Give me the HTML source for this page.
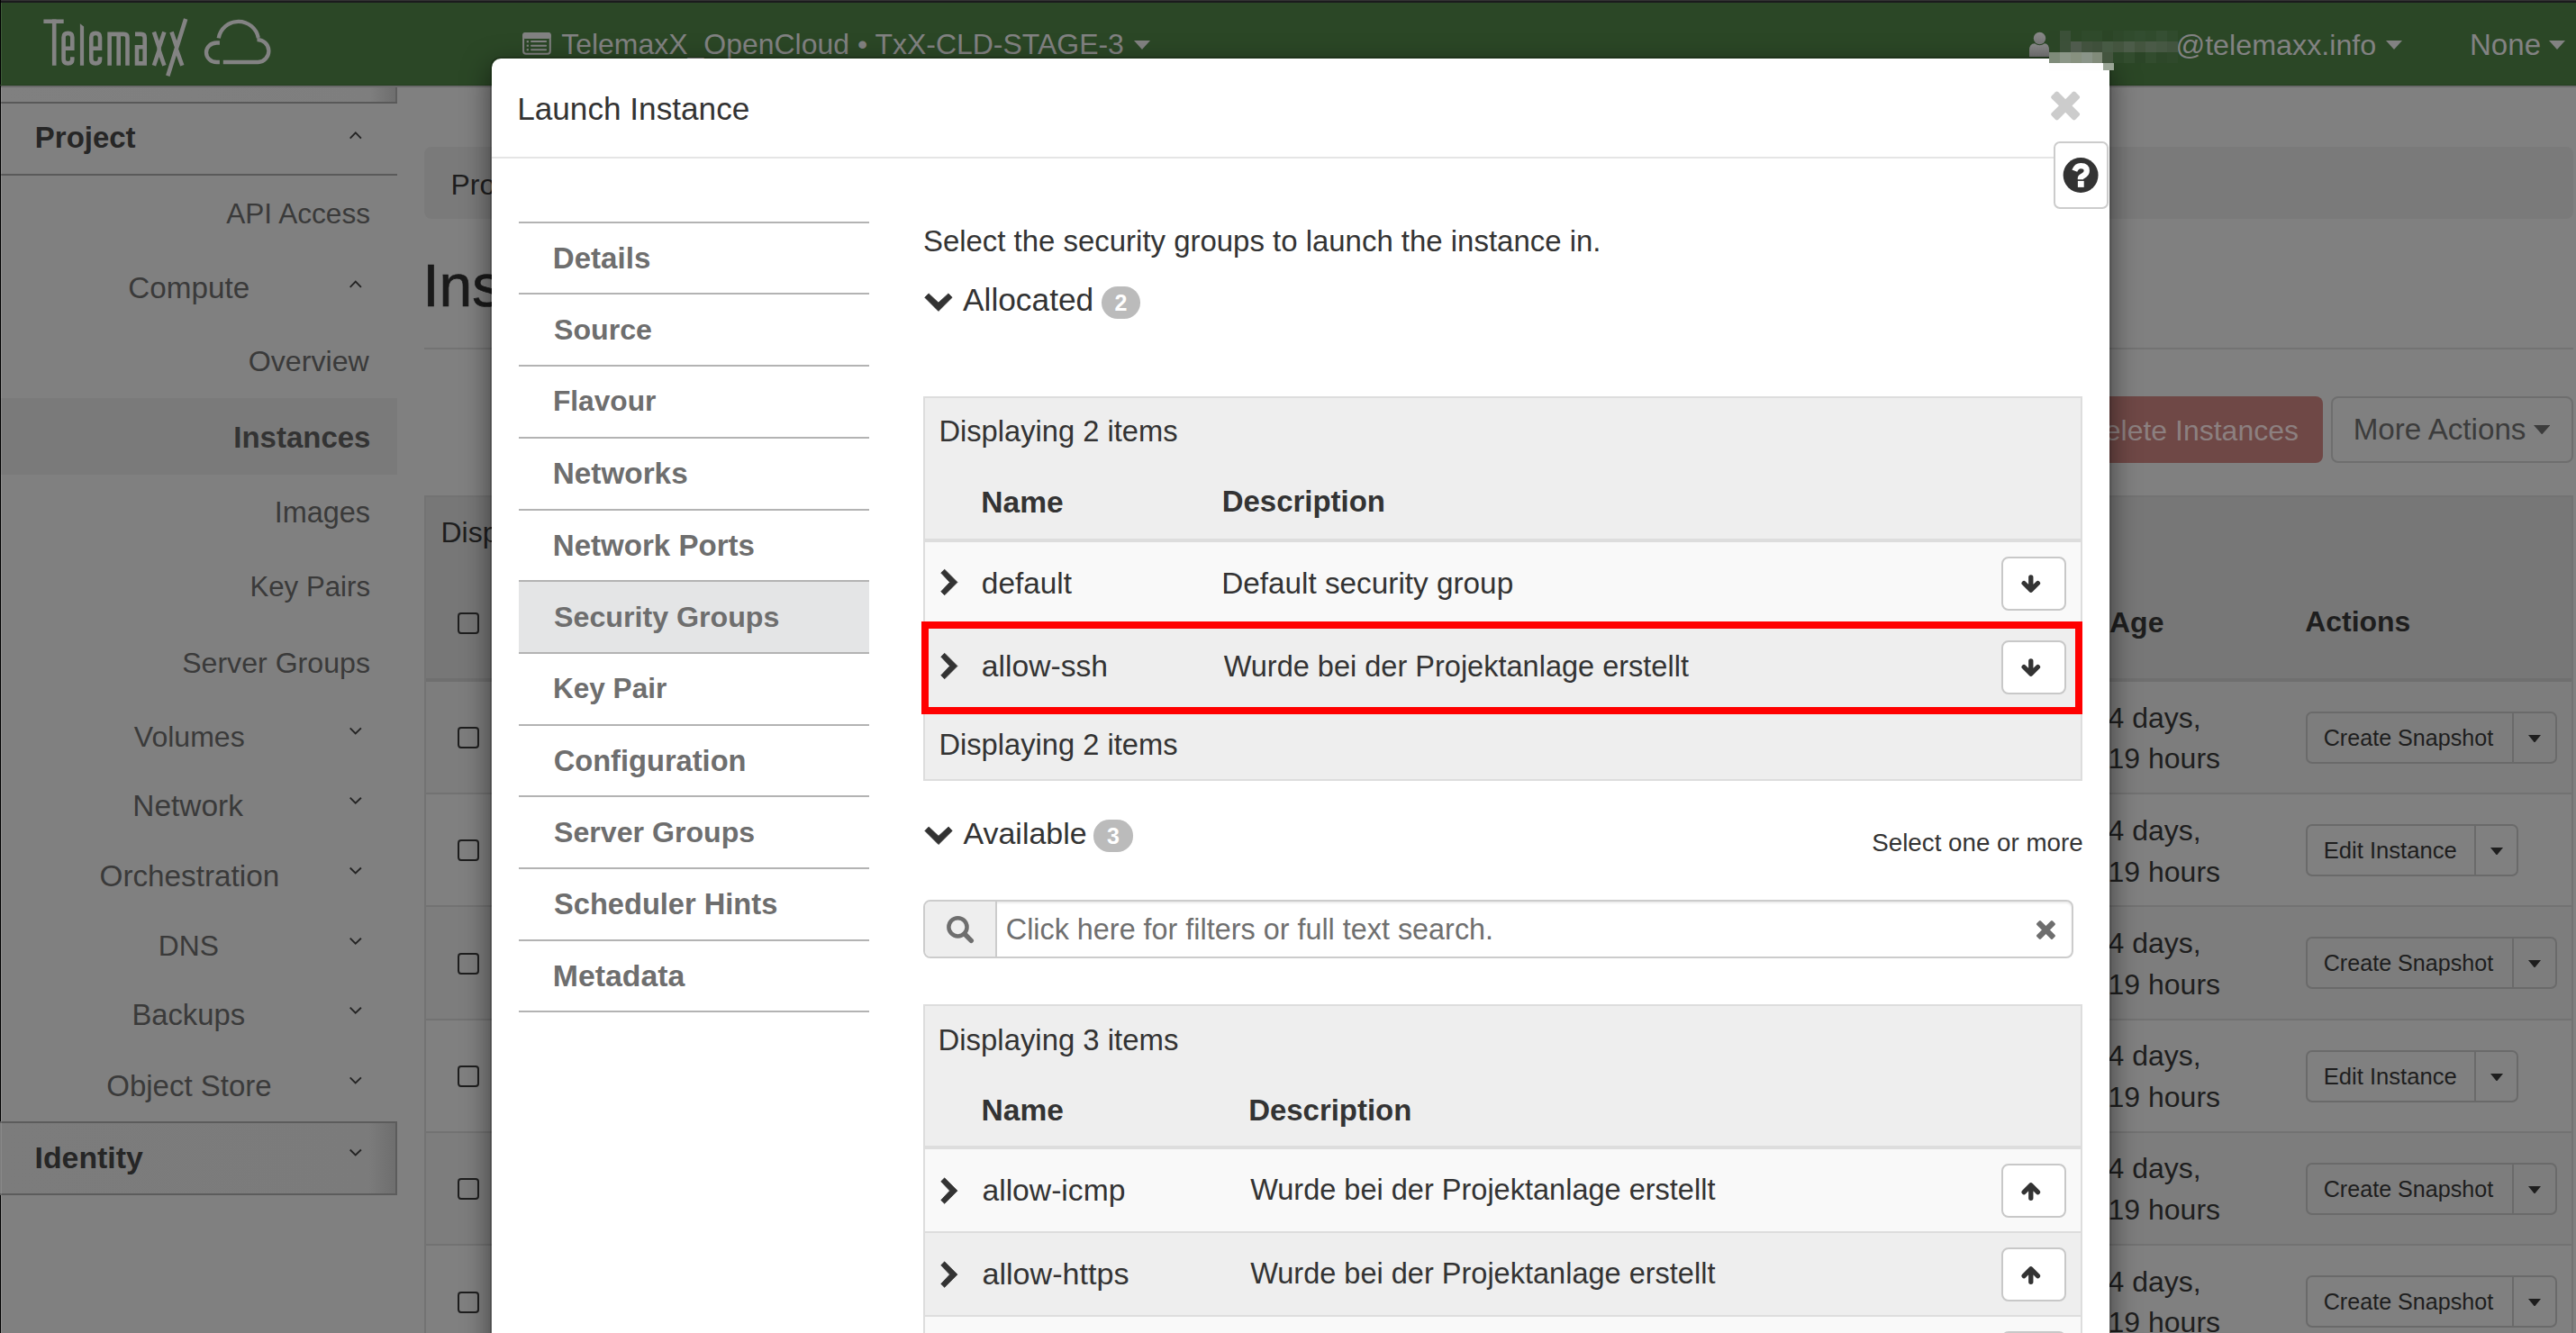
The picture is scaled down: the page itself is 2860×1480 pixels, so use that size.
<!DOCTYPE html>
<html><head><meta charset="utf-8"><style>
html,body{margin:0;padding:0;width:2860px;height:1480px;overflow:hidden;background:#808080;}
body{position:relative;font-family:"Liberation Sans",sans-serif;}
.t{position:absolute;white-space:nowrap;}
.r{position:absolute;}
#modal{position:absolute;left:0;top:0;width:2860px;height:1480px;overflow:hidden;}
</style></head><body>
<div class="r" style="left:0px;top:0px;width:2860px;height:1480px;background:#808080;"></div>
<div class="r" style="left:0px;top:0px;width:2860px;height:1px;background:#333333;"></div>
<div class="r" style="left:0px;top:1px;width:2860px;height:2px;background:#1b1b1d;"></div>
<div class="r" style="left:0px;top:3px;width:2860px;height:92px;background:#2b4726;"></div>
<div class="r" style="left:0px;top:95px;width:2860px;height:2px;background:#6a6a6a;"></div>
<div class="r" style="left:0px;top:0px;width:1px;height:1480px;background:#000000;"></div>
<div class="r" style="left:1px;top:3px;width:1px;height:92px;background:#3d5a38;"></div>
<svg class="r" style="left:0;top:0" width="320" height="95" viewBox="0 0 320 95">
<g fill="none" stroke="#838383" stroke-width="4.6" stroke-linecap="butt" stroke-linejoin="miter">
<path d="M48.4 23.7H70.7 M60.2 21.3V72.7"/>
<path d="M70.6 53.7H80.3V41.5Q80.3 36.9 75.5 36.9Q70.6 36.9 70.6 41.5V66Q70.6 70.4 75.5 70.4Q80.3 70.4 80.3 66V63.2"/>
<path d="M88.9 26.2L93.1 29.5V72.7H88.9Z" fill="#838383" stroke="none"/>
<path d="M101.3 53.7H111V41.5Q111 36.9 106.2 36.9Q101.3 36.9 101.3 41.5V66Q101.3 70.4 106.2 70.4Q111 70.4 111 66V63.2"/>
<path d="M121.6 72.7V37.9H137.5Q141.5 37.9 141.5 41.9V72.7 M131.7 37.9V72.7"/>
<path d="M150 37.9H156.7Q160.7 37.9 160.7 41.9V72.7 M160.7 52.2H152V70.4H160.7"/>
<path d="M170.9 35.6L176.6 52.5V56L170.9 72.7 M182.4 35.6L176.6 52.5 M176.6 56L182.4 72.7" stroke-linejoin="bevel"/>
<path d="M190.5 35.6L196.6 53.5 M196.1 55.5L202.3 72.7 M206.2 21L186.3 84.2"/>
</g>
<g fill="none" stroke="#838383" stroke-width="4.3">
<path d="M242.7 42.3A22.43 22.43 0 0 1 286.8 42"/>
<path d="M285.4 44.2A12.4 12.4 0 0 1 286.5 69H247.8"/>
<path d="M243.9 47.5H240.5A11.5 10.75 0 0 0 240.5 69H243.9"/>
</g>
</svg>
<svg class="r" style="left:578px;top:34px" width="36" height="30" viewBox="578 34 36 30">
<rect x="581.1" y="37" width="29.7" height="22.8" rx="3" fill="none" stroke="#828282" stroke-width="2"/>
<rect x="580.1" y="36" width="31.7" height="7.1" rx="3" fill="#828282"/>
<g fill="#828282"><rect x="584.7" y="45.1" width="2.2" height="2.2"/><rect x="584.7" y="49.6" width="2.2" height="2.2"/><rect x="584.7" y="54.1" width="2.2" height="2.2"/>
<rect x="589" y="45.1" width="18.1" height="2" rx="1"/><rect x="589" y="49.7" width="18.1" height="2" rx="1"/><rect x="589" y="54.2" width="18.1" height="2" rx="1"/></g>
</svg>
<div class="t" style="left:623.16px;top:32.92px;font-size:31.98px;line-height:31.98px;color:#828282;">TelemaxX_OpenCloud • TxX-CLD-STAGE-3</div>
<svg class="r" style="left:1259px;top:45px" width="18" height="10" viewBox="0 0 18 10"><path d="M0 0H18L9.0 10Z" fill="#828282"/></svg>
<svg class="r" style="left:2250px;top:34px" width="28" height="32" viewBox="2250 34 28 32">
<defs><linearGradient id="ug" x1="0" y1="0" x2="0" y2="1"><stop offset="0" stop-color="#8a8a8a"/><stop offset="1" stop-color="#767676"/></linearGradient></defs>
<circle cx="2264.5" cy="42.5" r="6.7" fill="url(#ug)"/>
<path d="M2253 63V56Q2253 48.3 2259 48.3Q2264.5 52 2270 48.3Q2275 48.3 2275 56V63Z" fill="url(#ug)"/>
</svg>
<div class="t" style="left:2415.42px;top:33.67px;font-size:32.28px;line-height:32.28px;color:#828282;">@telemaxx.info</div>
<svg class="r" style="left:2649px;top:45px" width="18" height="10" viewBox="0 0 18 10"><path d="M0 0H18L9.0 10Z" fill="#828282"/></svg>
<div class="t" style="left:2741.95px;top:32.97px;font-size:33.11px;line-height:33.11px;color:#828282;">None</div>
<svg class="r" style="left:2830px;top:45px" width="18" height="10" viewBox="0 0 18 10"><path d="M0 0H18L9.0 10Z" fill="#828282"/></svg>
<div class="r" style="left:1px;top:97px;width:438px;height:16px;background:linear-gradient(90deg,#808080 0px,#7e7e7e 410px,#6e6e6e 438px);"></div>
<div class="r" style="left:439px;top:97px;width:2px;height:18px;background:#5e5e5e;"></div>
<div class="r" style="left:1px;top:113px;width:440px;height:2px;background:#595959;"></div>
<div class="r" style="left:0px;top:94px;width:2860px;height:1px;background:#253f20;"></div>
<div class="r" style="left:1px;top:193px;width:440px;height:2px;background:#5a5a5a;"></div>
<div class="t" style="left:38.86px;top:137.12px;font-size:32.93px;line-height:32.93px;color:#262626;font-weight:700;">Project</div>
<div class="t" style="left:251.20px;top:222.24px;font-size:31.6px;line-height:31.6px;color:#3a3a3a;">API Access</div>
<div class="t" style="left:275.75px;top:385.45px;font-size:32.19px;line-height:32.19px;color:#3a3a3a;">Overview</div>
<div class="t" style="left:304.68px;top:552.52px;font-size:32.46px;line-height:32.46px;color:#3a3a3a;">Images</div>
<div class="t" style="left:277.40px;top:636.25px;font-size:31.24px;line-height:31.24px;color:#3a3a3a;">Key Pairs</div>
<div class="t" style="left:202.15px;top:719.80px;font-size:32.12px;line-height:32.12px;color:#3a3a3a;">Server Groups</div>
<div class="r" style="left:1px;top:442px;width:440px;height:85px;background:#7a7a7a;"></div>
<div class="t" style="left:259.26px;top:468.87px;font-size:32.99px;line-height:32.99px;color:#333333;font-weight:700;">Instances</div>
<div class="t" style="left:142.34px;top:302.86px;font-size:33.23px;line-height:33.23px;color:#3a3a3a;">Compute</div>
<div class="t" style="left:148.84px;top:801.57px;font-size:32.04px;line-height:32.04px;color:#3a3a3a;">Volumes</div>
<div class="t" style="left:147.33px;top:877.70px;font-size:33.43px;line-height:33.43px;color:#3a3a3a;">Network</div>
<div class="t" style="left:110.50px;top:955.62px;font-size:33.28px;line-height:33.28px;color:#3a3a3a;">Orchestration</div>
<div class="t" style="left:175.86px;top:1035.08px;font-size:31.79px;line-height:31.79px;color:#3a3a3a;">DNS</div>
<div class="t" style="left:146.38px;top:1111.25px;font-size:32.77px;line-height:32.77px;color:#3a3a3a;">Backups</div>
<div class="t" style="left:118.21px;top:1188.73px;font-size:33.03px;line-height:33.03px;color:#3a3a3a;">Object Store</div>
<div class="r" style="left:0px;top:1245px;width:441px;height:82px;background:linear-gradient(90deg,#7c7c7c 0px,#7b7b7b 410px,#6e6e6e 439px);box-sizing:border-box;border:2px solid #5c5c5c;border-left:none;"></div>
<div class="t" style="left:38.50px;top:1268.96px;font-size:33.83px;line-height:33.83px;color:#262626;font-weight:700;">Identity</div>
<svg class="r" style="left:0;top:0" width="441" height="1480"><path d="M388.7 153.6L394.8 147.4L400.9 153.6 M388.7 318.8L394.8 312.7L400.9 318.8 M388.7 808.4L394.7 814.4L400.9 808.4 M388.7 885.7L394.7 891.7L400.9 885.7 M388.7 963.5L394.7 969.5L400.9 963.5 M388.7 1041.7L394.7 1047.7L400.9 1041.7 M388.7 1118.7L394.7 1124.7L400.9 1118.7 M388.7 1196.4L394.7 1202.4L400.9 1196.4 M388.7 1276.5L394.7 1282.5L400.9 1276.5" fill="none" stroke="#242424" stroke-width="1.9"/></svg>
<div class="r" style="left:471px;top:163px;width:2386px;height:80px;background:#7a7a7a;border-radius:8px;"></div>
<div class="t" style="left:500.50px;top:188.91px;font-size:32px;line-height:32px;color:#1e1e1e;">Project / Compute / Instances</div>
<div class="t" style="left:469.20px;top:284.02px;font-size:66px;line-height:66px;color:#1a1a1a;-webkit-text-stroke:0.7px #1a1a1a;">Instances</div>
<div class="r" style="left:471px;top:386px;width:2386px;height:2px;background:#737373;"></div>
<div class="r" style="left:2100px;top:440px;width:479px;height:74px;background:#6f4846;border-radius:8px;"></div>
<div class="t" style="right:308.00px;text-align:right;top:461.51px;font-size:32px;line-height:32px;color:#8c8080;">Delete Instances</div>
<div class="r" style="left:2588px;top:440px;width:269px;height:74px;background:transparent;box-sizing:border-box;border:2px solid #6e6e6e;border-radius:8px;"></div>
<div class="t" style="left:2612.64px;top:459.89px;font-size:33.2px;line-height:33.2px;color:#3c3c3c;">More Actions</div>
<svg class="r" style="left:2812.6px;top:471.8px" width="18.4" height="10.4" viewBox="0 0 18.4 10.4"><path d="M0 0H18.4L9.2 10.4Z" fill="#3c3c3c"/></svg>
<div class="r" style="left:471px;top:550px;width:2386px;height:930px;background:#7d7d7d;box-sizing:border-box;border:2px solid #737373;border-bottom:none;"></div>
<div class="r" style="left:473px;top:552px;width:2382px;height:201px;background:#777777;"></div>
<div class="r" style="left:473px;top:753px;width:2382px;height:4px;background:#6f6f6f;"></div>
<div class="t" style="left:489.50px;top:574.91px;font-size:32px;line-height:32px;color:#1e1e1e;">Displaying 6 items</div>
<div class="t" style="left:2342.00px;top:674.91px;font-size:32px;line-height:32px;color:#1e1e1e;font-weight:700;">Age</div>
<div class="t" style="left:2559.20px;top:674.96px;font-size:31.94px;line-height:31.94px;color:#1e1e1e;font-weight:700;">Actions</div>
<div class="r" style="left:508px;top:680px;width:24px;height:24px;background:transparent;box-sizing:border-box;border:2px solid #1e1e1e;border-radius:4px;"></div>
<div class="r" style="left:473px;top:757px;width:2382px;height:123px;background:#7d7d7d;"></div>
<div class="r" style="left:473px;top:880px;width:2382px;height:2px;background:#727272;"></div>
<div class="r" style="left:508px;top:807px;width:24px;height:24px;background:transparent;box-sizing:border-box;border:2px solid #1e1e1e;border-radius:4px;"></div>
<div class="t" style="left:2340.50px;top:780.51px;font-size:32px;line-height:32px;color:#1e1e1e;">4 days,</div>
<div class="t" style="left:2340.50px;top:826.41px;font-size:32px;line-height:32px;color:#1e1e1e;">19 hours</div>
<div class="r" style="left:2560px;top:790px;width:279px;height:58px;background:transparent;box-sizing:border-box;border:2px solid #6a6a6a;border-radius:7px;"></div>
<div class="r" style="left:2789px;top:790px;width:2px;height:58px;background:#6a6a6a;"></div>
<div class="t" style="left:2579.74px;top:807.33px;font-size:25.12px;line-height:25.12px;color:#1e1e1e;">Create Snapshot</div>
<svg class="r" style="left:2807px;top:815.7px" width="14" height="8.6" viewBox="0 0 14 8.6"><path d="M0 0H14L7.0 8.6Z" fill="#1e1e1e"/></svg>
<div class="r" style="left:473px;top:882px;width:2382px;height:123px;background:#808080;"></div>
<div class="r" style="left:473px;top:1005px;width:2382px;height:2px;background:#727272;"></div>
<div class="r" style="left:508px;top:932px;width:24px;height:24px;background:transparent;box-sizing:border-box;border:2px solid #1e1e1e;border-radius:4px;"></div>
<div class="t" style="left:2340.50px;top:905.71px;font-size:32px;line-height:32px;color:#1e1e1e;">4 days,</div>
<div class="t" style="left:2340.50px;top:951.61px;font-size:32px;line-height:32px;color:#1e1e1e;">19 hours</div>
<div class="r" style="left:2560px;top:915px;width:236px;height:58px;background:transparent;box-sizing:border-box;border:2px solid #6a6a6a;border-radius:7px;"></div>
<div class="r" style="left:2747px;top:915px;width:2px;height:58px;background:#6a6a6a;"></div>
<div class="t" style="left:2579.65px;top:931.89px;font-size:25.64px;line-height:25.64px;color:#1e1e1e;">Edit Instance</div>
<svg class="r" style="left:2765px;top:940.7px" width="14" height="8.6" viewBox="0 0 14 8.6"><path d="M0 0H14L7.0 8.6Z" fill="#1e1e1e"/></svg>
<div class="r" style="left:473px;top:1007px;width:2382px;height:124px;background:#7d7d7d;"></div>
<div class="r" style="left:473px;top:1131px;width:2382px;height:2px;background:#727272;"></div>
<div class="r" style="left:508px;top:1058px;width:24px;height:24px;background:transparent;box-sizing:border-box;border:2px solid #1e1e1e;border-radius:4px;"></div>
<div class="t" style="left:2340.50px;top:1030.91px;font-size:32px;line-height:32px;color:#1e1e1e;">4 days,</div>
<div class="t" style="left:2340.50px;top:1076.81px;font-size:32px;line-height:32px;color:#1e1e1e;">19 hours</div>
<div class="r" style="left:2560px;top:1040px;width:279px;height:58px;background:transparent;box-sizing:border-box;border:2px solid #6a6a6a;border-radius:7px;"></div>
<div class="r" style="left:2789px;top:1040px;width:2px;height:58px;background:#6a6a6a;"></div>
<div class="t" style="left:2579.74px;top:1057.33px;font-size:25.12px;line-height:25.12px;color:#1e1e1e;">Create Snapshot</div>
<svg class="r" style="left:2807px;top:1065.7px" width="14" height="8.6" viewBox="0 0 14 8.6"><path d="M0 0H14L7.0 8.6Z" fill="#1e1e1e"/></svg>
<div class="r" style="left:473px;top:1133px;width:2382px;height:123px;background:#808080;"></div>
<div class="r" style="left:473px;top:1256px;width:2382px;height:2px;background:#727272;"></div>
<div class="r" style="left:508px;top:1183px;width:24px;height:24px;background:transparent;box-sizing:border-box;border:2px solid #1e1e1e;border-radius:4px;"></div>
<div class="t" style="left:2340.50px;top:1156.11px;font-size:32px;line-height:32px;color:#1e1e1e;">4 days,</div>
<div class="t" style="left:2340.50px;top:1202.01px;font-size:32px;line-height:32px;color:#1e1e1e;">19 hours</div>
<div class="r" style="left:2560px;top:1166px;width:236px;height:58px;background:transparent;box-sizing:border-box;border:2px solid #6a6a6a;border-radius:7px;"></div>
<div class="r" style="left:2747px;top:1166px;width:2px;height:58px;background:#6a6a6a;"></div>
<div class="t" style="left:2579.65px;top:1182.89px;font-size:25.64px;line-height:25.64px;color:#1e1e1e;">Edit Instance</div>
<svg class="r" style="left:2765px;top:1191.7px" width="14" height="8.6" viewBox="0 0 14 8.6"><path d="M0 0H14L7.0 8.6Z" fill="#1e1e1e"/></svg>
<div class="r" style="left:473px;top:1258px;width:2382px;height:123px;background:#7d7d7d;"></div>
<div class="r" style="left:473px;top:1381px;width:2382px;height:2px;background:#727272;"></div>
<div class="r" style="left:508px;top:1308px;width:24px;height:24px;background:transparent;box-sizing:border-box;border:2px solid #1e1e1e;border-radius:4px;"></div>
<div class="t" style="left:2340.50px;top:1281.31px;font-size:32px;line-height:32px;color:#1e1e1e;">4 days,</div>
<div class="t" style="left:2340.50px;top:1327.21px;font-size:32px;line-height:32px;color:#1e1e1e;">19 hours</div>
<div class="r" style="left:2560px;top:1291px;width:279px;height:58px;background:transparent;box-sizing:border-box;border:2px solid #6a6a6a;border-radius:7px;"></div>
<div class="r" style="left:2789px;top:1291px;width:2px;height:58px;background:#6a6a6a;"></div>
<div class="t" style="left:2579.74px;top:1308.33px;font-size:25.12px;line-height:25.12px;color:#1e1e1e;">Create Snapshot</div>
<svg class="r" style="left:2807px;top:1316.7px" width="14" height="8.6" viewBox="0 0 14 8.6"><path d="M0 0H14L7.0 8.6Z" fill="#1e1e1e"/></svg>
<div class="r" style="left:473px;top:1383px;width:2382px;height:123px;background:#808080;"></div>
<div class="r" style="left:473px;top:1506px;width:2382px;height:2px;background:#727272;"></div>
<div class="r" style="left:508px;top:1434px;width:24px;height:24px;background:transparent;box-sizing:border-box;border:2px solid #1e1e1e;border-radius:4px;"></div>
<div class="t" style="left:2340.50px;top:1406.51px;font-size:32px;line-height:32px;color:#1e1e1e;">4 days,</div>
<div class="t" style="left:2340.50px;top:1452.41px;font-size:32px;line-height:32px;color:#1e1e1e;">19 hours</div>
<div class="r" style="left:2560px;top:1416px;width:279px;height:58px;background:transparent;box-sizing:border-box;border:2px solid #6a6a6a;border-radius:7px;"></div>
<div class="r" style="left:2789px;top:1416px;width:2px;height:58px;background:#6a6a6a;"></div>
<div class="t" style="left:2579.74px;top:1433.33px;font-size:25.12px;line-height:25.12px;color:#1e1e1e;">Create Snapshot</div>
<svg class="r" style="left:2807px;top:1441.7px" width="14" height="8.6" viewBox="0 0 14 8.6"><path d="M0 0H14L7.0 8.6Z" fill="#1e1e1e"/></svg>
<div class="r" style="left:1px;top:97px;width:1px;height:1383px;background:rgba(255,255,255,0.1);"></div>
<div id="modal"><div class="r" style="left:544px;top:63px;width:1796px;height:1500px;background:#fff;border:2px solid rgba(0,0,0,.2);background-clip:padding-box;border-radius:12px;box-shadow:0 10px 30px rgba(0,0,0,.5);"></div>
<div class="t" style="left:574.18px;top:102.61px;font-size:35.19px;line-height:35.19px;color:#333333;">Launch Instance</div>
<div class="r" style="left:546px;top:174px;width:1734px;height:2px;background:#e5e5e5;"></div>
<div class="r" style="left:2279.5px;top:156.7px;width:61.09999999999991px;height:75.70000000000002px;background:#fff;box-sizing:border-box;border:2px solid #cccccc;border-radius:7px;"></div>
<svg class="r" style="left:0;top:0" width="2860" height="400"><circle cx="2310.1" cy="194.5" r="19.45" fill="#333"/><path d="M2303.3 189.6Q2305.5 184.1 2310.2 184.1Q2316.8 184.1 2316.8 189.6Q2316.8 193.3 2312.9 195.2Q2309.9 196.7 2309.9 198V199.3" fill="none" stroke="#fff" stroke-width="6.3"/><rect x="2306.9" y="200.9" width="6.8" height="7" fill="#fff"/></svg>
<svg class="r" style="left:0;top:0" width="2860" height="1480"><g fill="#cccccc"><rect x="2274.54" y="112.30" width="37.22" height="10.30" rx="2.27" transform="rotate(45 2293.15 117.45)"/><rect x="2274.54" y="112.30" width="37.22" height="10.30" rx="2.27" transform="rotate(-45 2293.15 117.45)"/></g></svg>
<div class="t" style="left:613.85px;top:270.20px;font-size:33.07px;line-height:33.07px;color:#6e6e6e;font-weight:700;">Details</div>
<div class="t" style="left:615.04px;top:349.98px;font-size:32.15px;line-height:32.15px;color:#6e6e6e;font-weight:700;">Source</div>
<div class="t" style="left:613.94px;top:430.35px;font-size:31.71px;line-height:31.71px;color:#6e6e6e;font-weight:700;">Flavour</div>
<div class="t" style="left:613.84px;top:509.01px;font-size:33.29px;line-height:33.29px;color:#6e6e6e;font-weight:700;">Networks</div>
<div class="t" style="left:613.85px;top:589.22px;font-size:33.05px;line-height:33.05px;color:#6e6e6e;font-weight:700;">Network Ports</div>
<div class="r" style="left:576px;top:646px;width:389px;height:78px;background:#e4e5e6;"></div>
<div class="t" style="left:615.03px;top:668.94px;font-size:32.2px;line-height:32.2px;color:#6e6e6e;font-weight:700;">Security Groups</div>
<div class="t" style="left:613.95px;top:749.47px;font-size:31.57px;line-height:31.57px;color:#6e6e6e;font-weight:700;">Key Pair</div>
<div class="t" style="left:614.69px;top:828.56px;font-size:32.64px;line-height:32.64px;color:#6e6e6e;font-weight:700;">Configuration</div>
<div class="t" style="left:615.04px;top:908.00px;font-size:32.12px;line-height:32.12px;color:#6e6e6e;font-weight:700;">Server Groups</div>
<div class="t" style="left:615.02px;top:987.59px;font-size:32.61px;line-height:32.61px;color:#6e6e6e;font-weight:700;">Scheduler Hints</div>
<div class="t" style="left:613.80px;top:1066.59px;font-size:33.79px;line-height:33.79px;color:#6e6e6e;font-weight:700;">Metadata</div>
<div class="r" style="left:576px;top:246px;width:389px;height:2px;background:#b3b3b3;"></div>
<div class="r" style="left:576px;top:325px;width:389px;height:2px;background:#b3b3b3;"></div>
<div class="r" style="left:576px;top:405px;width:389px;height:2px;background:#b3b3b3;"></div>
<div class="r" style="left:576px;top:485px;width:389px;height:2px;background:#b3b3b3;"></div>
<div class="r" style="left:576px;top:565px;width:389px;height:2px;background:#b3b3b3;"></div>
<div class="r" style="left:576px;top:644px;width:389px;height:2px;background:#b3b3b3;"></div>
<div class="r" style="left:576px;top:724px;width:389px;height:2px;background:#b3b3b3;"></div>
<div class="r" style="left:576px;top:804px;width:389px;height:2px;background:#b3b3b3;"></div>
<div class="r" style="left:576px;top:883px;width:389px;height:2px;background:#b3b3b3;"></div>
<div class="r" style="left:576px;top:963px;width:389px;height:2px;background:#b3b3b3;"></div>
<div class="r" style="left:576px;top:1043px;width:389px;height:2px;background:#b3b3b3;"></div>
<div class="r" style="left:576px;top:1122px;width:389px;height:2px;background:#b3b3b3;"></div>
<div class="t" style="left:1024.92px;top:251.80px;font-size:32.95px;line-height:32.95px;color:#333333;">Select the security groups to launch the instance in.</div>
<svg class="r" style="left:0;top:0" width="2860" height="1480"><path d="M1026.75 330.25L1031.06 325.90L1041.90 336.06L1053.00 325.90L1057.10 330.25L1041.90 345.40Z" fill="#333" stroke="#333" stroke-width="0.8" stroke-linejoin="round" /></svg>
<div class="t" style="left:1069.00px;top:315.10px;font-size:35.31px;line-height:35.31px;color:#333333;">Allocated</div>
<div class="r" style="left:1222.9px;top:318.1px;width:43.0px;height:35.599999999999966px;background:#bbbbbb;border-radius:17.799999999999983px;"></div>
<div class="t" style="left:744.40px;width:1000px;text-align:center;top:323.93px;font-size:25px;line-height:25px;color:#ffffff;font-weight:700;">2</div>
<div class="r" style="left:1025px;top:439.5px;width:1287px;height:427.5px;background:#eeeeee;box-sizing:border-box;border:2px solid #dddddd;"></div>
<div class="t" style="left:1042.38px;top:463.32px;font-size:32.69px;line-height:32.69px;color:#333333;">Displaying 2 items</div>
<div class="t" style="left:1089.32px;top:540.59px;font-size:33.56px;line-height:33.56px;color:#333333;font-weight:700;">Name</div>
<div class="t" style="left:1356.76px;top:541.10px;font-size:32.95px;line-height:32.95px;color:#333333;font-weight:700;">Description</div>
<div class="r" style="left:1027px;top:598px;width:1283px;height:4px;background:#dddddd;"></div>
<div class="r" style="left:1027px;top:602px;width:1283px;height:91px;background:#f9f9f9;"></div>
<div class="r" style="left:1027px;top:693px;width:1283px;height:2px;background:#dddddd;"></div>
<svg class="r" style="left:0;top:0" width="2860" height="1480"><path d="M1048.70 632.20L1062.95 646.45L1048.70 660.70L1044.76 656.80L1054.50 646.45L1044.76 636.10Z" fill="#333" stroke="#333" stroke-width="0.8" stroke-linejoin="round" /></svg>
<div class="t" style="left:1089.87px;top:631.45px;font-size:33.37px;line-height:33.37px;color:#333333;">default</div>
<div class="t" style="left:1356.13px;top:631.49px;font-size:33.32px;line-height:33.32px;color:#333333;">Default security group</div>
<div class="r" style="left:2222.2px;top:618.2px;width:71.40000000000009px;height:59.60000000000002px;background:#ffffff;box-sizing:border-box;border:2px solid #c8c8c8;border-radius:8px;"></div>
<svg class="r" style="left:0;top:0" width="2860" height="1480"><path d="M2254.8 640.8V653.0 M2247.1000000000004 647.5L2254.8 655.2L2262.5 647.5" fill="none" stroke="#333" stroke-width="5.3" stroke-linejoin="round" stroke-linecap="round"/></svg>
<div class="r" style="left:1027px;top:695px;width:1283px;height:91px;background:#eeeeee;"></div>
<div class="r" style="left:1027px;top:786px;width:1283px;height:2px;background:#dddddd;"></div>
<svg class="r" style="left:0;top:0" width="2860" height="1480"><path d="M1048.70 725.25L1062.95 739.50L1048.70 753.75L1044.76 749.85L1054.50 739.50L1044.76 729.15Z" fill="#333" stroke="#333" stroke-width="0.8" stroke-linejoin="round" /></svg>
<div class="t" style="left:1089.85px;top:723.21px;font-size:33.65px;line-height:33.65px;color:#333333;">allow-ssh</div>
<div class="t" style="left:1358.64px;top:724.17px;font-size:32.52px;line-height:32.52px;color:#333333;">Wurde bei der Projektanlage erstellt</div>
<div class="r" style="left:2222.2px;top:711.2px;width:71.40000000000009px;height:59.60000000000002px;background:#ffffff;box-sizing:border-box;border:2px solid #c8c8c8;border-radius:8px;"></div>
<svg class="r" style="left:0;top:0" width="2860" height="1480"><path d="M2254.8 733.8V746.0 M2247.1000000000004 740.5L2254.8 748.2L2262.5 740.5" fill="none" stroke="#333" stroke-width="5.3" stroke-linejoin="round" stroke-linecap="round"/></svg>
<div class="t" style="left:1042.38px;top:810.82px;font-size:32.69px;line-height:32.69px;color:#333333;">Displaying 2 items</div>
<div class="r" style="left:1023px;top:690px;width:1289px;height:102.5px;background:transparent;box-sizing:border-box;border:8px solid #ff0000;"></div>
<svg class="r" style="left:0;top:0" width="2860" height="1480"><path d="M1026.85 922.45L1031.16 918.10L1042.00 928.26L1053.10 918.10L1057.20 922.45L1042.00 937.60Z" fill="#333" stroke="#333" stroke-width="0.8" stroke-linejoin="round" /></svg>
<div class="t" style="left:1069.40px;top:908.42px;font-size:33.99px;line-height:33.99px;color:#333333;">Available</div>
<div class="r" style="left:1214.3px;top:910.4px;width:43.299999999999955px;height:35.200000000000045px;background:#bbbbbb;border-radius:17.600000000000023px;"></div>
<div class="t" style="left:735.95px;width:1000px;text-align:center;top:915.83px;font-size:25px;line-height:25px;color:#ffffff;font-weight:700;">3</div>
<div class="t" style="left:2078.25px;top:922.10px;font-size:27.75px;line-height:27.75px;color:#333333;">Select one or more</div>
<div class="r" style="left:1025px;top:999px;width:1277px;height:65px;background:#ffffff;box-sizing:border-box;border:2px solid #cccccc;border-radius:8px;box-shadow:inset 0 2px 2px rgba(0,0,0,.075);"></div>
<div class="r" style="left:1027px;top:1001px;width:78px;height:61px;background:#eeeeee;border-radius:6px 0 0 6px;"></div>
<div class="r" style="left:1105px;top:1001px;width:2px;height:61px;background:#cccccc;"></div>
<svg class="r" style="left:0;top:0" width="2860" height="1480"><path d="M1073.55 1029.3A10.1 10.1 0 1 1 1053.35 1029.3A10.1 10.1 0 1 1 1073.55 1029.3Z" fill="none" stroke="#6e6e6e" stroke-width="4.5" stroke-linejoin="round" /></svg>
<svg class="r" style="left:0;top:0" width="2860" height="1480"><path d="M1071 1037L1078.3 1044.3" fill="none" stroke="#6e6e6e" stroke-width="5.4" stroke-linejoin="round" stroke-linecap="round"/></svg>
<div class="t" style="left:1116.78px;top:1016.09px;font-size:32.37px;line-height:32.37px;color:#6f6f6f;">Click here for filters or full text search.</div>
<svg class="r" style="left:0;top:0" width="2860" height="1480"><g fill="#6e6e6e"><rect x="2259.02" y="1029.25" width="24.85" height="6.40" rx="1.41" transform="rotate(45 2271.45 1032.45)"/><rect x="2259.02" y="1029.25" width="24.85" height="6.40" rx="1.41" transform="rotate(-45 2271.45 1032.45)"/></g></svg>
<div class="r" style="left:1025px;top:1114.5px;width:1287px;height:485.5px;background:#eeeeee;box-sizing:border-box;border:2px solid #dddddd;"></div>
<div class="t" style="left:1041.57px;top:1139.15px;font-size:32.89px;line-height:32.89px;color:#333333;">Displaying 3 items</div>
<div class="t" style="left:1089.62px;top:1216.39px;font-size:33.56px;line-height:33.56px;color:#333333;font-weight:700;">Name</div>
<div class="t" style="left:1386.16px;top:1216.90px;font-size:32.95px;line-height:32.95px;color:#333333;font-weight:700;">Description</div>
<div class="r" style="left:1027px;top:1272px;width:1283px;height:4px;background:#dddddd;"></div>
<div class="r" style="left:1027px;top:1276px;width:1283px;height:91px;background:#f9f9f9;"></div>
<div class="r" style="left:1027px;top:1367px;width:1283px;height:2px;background:#dddddd;"></div>
<svg class="r" style="left:0;top:0" width="2860" height="1480"><path d="M1048.70 1307.85L1062.95 1322.10L1048.70 1336.35L1044.76 1332.45L1054.50 1322.10L1044.76 1311.75Z" fill="#333" stroke="#333" stroke-width="0.8" stroke-linejoin="round" /></svg>
<div class="t" style="left:1090.45px;top:1304.50px;font-size:33.66px;line-height:33.66px;color:#333333;">allow-icmp</div>
<div class="t" style="left:1388.14px;top:1305.47px;font-size:32.52px;line-height:32.52px;color:#333333;">Wurde bei der Projektanlage erstellt</div>
<div class="r" style="left:2222.2px;top:1292.2px;width:71.40000000000009px;height:59.59999999999991px;background:#ffffff;box-sizing:border-box;border:2px solid #c8c8c8;border-radius:8px;"></div>
<svg class="r" style="left:0;top:0" width="2860" height="1480"><path d="M2254.8 1330.35V1317.0 M2247.1000000000004 1323.7L2254.8 1315.8L2262.5 1323.7" fill="none" stroke="#333" stroke-width="5.3" stroke-linejoin="round" stroke-linecap="round"/></svg>
<div class="r" style="left:1027px;top:1369px;width:1283px;height:91px;background:#eeeeee;"></div>
<div class="r" style="left:1027px;top:1460px;width:1283px;height:2px;background:#dddddd;"></div>
<svg class="r" style="left:0;top:0" width="2860" height="1480"><path d="M1048.70 1400.85L1062.95 1415.10L1048.70 1429.35L1044.76 1425.45L1054.50 1415.10L1044.76 1404.75Z" fill="#333" stroke="#333" stroke-width="0.8" stroke-linejoin="round" /></svg>
<div class="t" style="left:1090.44px;top:1396.92px;font-size:34.11px;line-height:34.11px;color:#333333;">allow-https</div>
<div class="t" style="left:1388.14px;top:1398.27px;font-size:32.52px;line-height:32.52px;color:#333333;">Wurde bei der Projektanlage erstellt</div>
<div class="r" style="left:2222.2px;top:1385.2px;width:71.40000000000009px;height:59.59999999999991px;background:#ffffff;box-sizing:border-box;border:2px solid #c8c8c8;border-radius:8px;"></div>
<svg class="r" style="left:0;top:0" width="2860" height="1480"><path d="M2254.8 1423.35V1410.0 M2247.1000000000004 1416.7L2254.8 1408.8L2262.5 1416.7" fill="none" stroke="#333" stroke-width="5.3" stroke-linejoin="round" stroke-linecap="round"/></svg>
<div class="r" style="left:1027px;top:1462px;width:1283px;height:91px;background:#f9f9f9;"></div>
<div class="r" style="left:1027px;top:1553px;width:1283px;height:2px;background:#dddddd;"></div>
<svg class="r" style="left:0;top:0" width="2860" height="1480"><path d="M1048.70 1493.85L1062.95 1508.10L1048.70 1522.35L1044.76 1518.45L1054.50 1508.10L1044.76 1497.75Z" fill="#333" stroke="#333" stroke-width="0.8" stroke-linejoin="round" /></svg>
<div class="t" style="left:1090.39px;top:1488.72px;font-size:35.29px;line-height:35.29px;color:#333333;">allow-http</div>
<div class="t" style="left:1388.14px;top:1491.07px;font-size:32.52px;line-height:32.52px;color:#333333;">Wurde bei der Projektanlage erstellt</div>
<div class="r" style="left:2222.2px;top:1478.2px;width:71.40000000000009px;height:59.59999999999991px;background:#ffffff;box-sizing:border-box;border:2px solid #c8c8c8;border-radius:8px;"></div>
<svg class="r" style="left:0;top:0" width="2860" height="1480"><path d="M2254.8 1516.35V1503.0 M2247.1000000000004 1509.7L2254.8 1501.8L2262.5 1509.7" fill="none" stroke="#333" stroke-width="5.3" stroke-linejoin="round" stroke-linecap="round"/></svg>
</div><div class="r" style="left:2275px;top:34px;width:12px;height:12px;background:#2b4526;"></div>
<div class="r" style="left:2287px;top:34px;width:12px;height:12px;background:#3b5038;"></div>
<div class="r" style="left:2299px;top:34px;width:12px;height:12px;background:#2c4727;"></div>
<div class="r" style="left:2311px;top:34px;width:12px;height:12px;background:#2f4a2b;"></div>
<div class="r" style="left:2323px;top:34px;width:11px;height:12px;background:#2f4a2b;"></div>
<div class="r" style="left:2334px;top:34px;width:12px;height:12px;background:#2b4526;"></div>
<div class="r" style="left:2346px;top:34px;width:12px;height:12px;background:#2e482a;"></div>
<div class="r" style="left:2358px;top:34px;width:12px;height:12px;background:#304b2d;"></div>
<div class="r" style="left:2370px;top:34px;width:12px;height:12px;background:#324d30;"></div>
<div class="r" style="left:2382px;top:34px;width:12px;height:12px;background:#304b2d;"></div>
<div class="r" style="left:2394px;top:34px;width:12px;height:12px;background:#354f33;"></div>
<div class="r" style="left:2406px;top:34px;width:12px;height:12px;background:#304b2d;"></div>
<div class="r" style="left:2275px;top:46px;width:12px;height:12px;background:#2b4526;"></div>
<div class="r" style="left:2287px;top:46px;width:12px;height:12px;background:#3c5039;"></div>
<div class="r" style="left:2299px;top:46px;width:12px;height:12px;background:#4f5b4d;"></div>
<div class="r" style="left:2311px;top:46px;width:12px;height:12px;background:#42523e;"></div>
<div class="r" style="left:2323px;top:46px;width:11px;height:12px;background:#3f503b;"></div>
<div class="r" style="left:2334px;top:46px;width:12px;height:12px;background:#475a44;"></div>
<div class="r" style="left:2346px;top:46px;width:12px;height:12px;background:#44553f;"></div>
<div class="r" style="left:2358px;top:46px;width:12px;height:12px;background:#4c5c49;"></div>
<div class="r" style="left:2370px;top:46px;width:12px;height:12px;background:#44553f;"></div>
<div class="r" style="left:2382px;top:46px;width:12px;height:12px;background:#4a5a47;"></div>
<div class="r" style="left:2394px;top:46px;width:12px;height:12px;background:#465843;"></div>
<div class="r" style="left:2406px;top:46px;width:12px;height:12px;background:#42543f;"></div>
<div class="r" style="left:2275px;top:58px;width:12px;height:12px;background:#7e8b79;"></div>
<div class="r" style="left:2287px;top:58px;width:12px;height:12px;background:#8b9687;"></div>
<div class="r" style="left:2299px;top:58px;width:12px;height:12px;background:#87917f;"></div>
<div class="r" style="left:2311px;top:58px;width:12px;height:12px;background:#8a9488;"></div>
<div class="r" style="left:2323px;top:58px;width:11px;height:12px;background:#818b7a;"></div>
<div class="r" style="left:2334px;top:58px;width:12px;height:12px;background:#44553f;"></div>
<div class="r" style="left:2346px;top:58px;width:12px;height:12px;background:#2d4729;"></div>
<div class="r" style="left:2358px;top:58px;width:12px;height:12px;background:#324c2e;"></div>
<div class="r" style="left:2370px;top:58px;width:12px;height:12px;background:#2b4527;"></div>
<div class="r" style="left:2382px;top:58px;width:12px;height:12px;background:#324c2e;"></div>
<div class="r" style="left:2394px;top:58px;width:12px;height:12px;background:#2d4729;"></div>
<div class="r" style="left:2406px;top:58px;width:12px;height:12px;background:#2f492b;"></div>
<div class="r" style="left:2335px;top:70px;width:12px;height:8px;background:#9aa596;"></div>
<div class="r" style="left:2275px;top:70px;width:60px;height:8px;background:#fdfdfd;"></div>
</body></html>
